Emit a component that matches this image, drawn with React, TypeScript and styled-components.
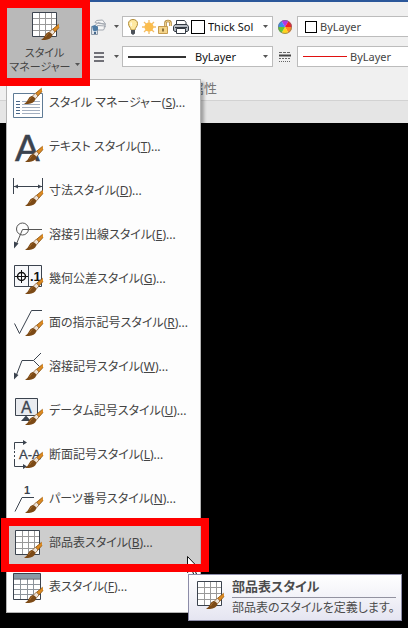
import React from "react";
import styled, { createGlobalStyle, css } from "styled-components";

const GlobalStyle = createGlobalStyle`
  * { box-sizing: border-box; }
  body {
    margin: 0;
    background: #000;
    color: #444;
    font: 12px/16px "Noto Sans", "Noto Sans CJK JP", sans-serif;
    font-feature-settings: "palt";
  }
  button, select { font: inherit; color: inherit; font-feature-settings: inherit; }
  svg { flex: none; }
`;

const Page = styled.main`
  min-height: 100vh;
  background: #000;
`;

const Ribbon = styled.header`
  border-top: 2px solid #2b579a;
  background: #f0f0f0;
`;

const Panel = styled.div`
  display: flex;
  height: 76px;
`;

const ManagerSlot = styled.div`
  position: relative;
  flex: 0 0 75px;
  height: 70px;
  margin: 6px 9px 0 7px;
`;

const ManagerButton = styled.button`
  position: relative;
  z-index: 3;
  display: flex;
  flex-direction: column;
  align-items: center;
  justify-content: flex-start;
  width: 100%;
  height: 100%;
  padding: 1px 0 0;
  border: 0;
  background: #b9b9b9;
  outline: 8px solid #f00;
  font-size: 11px;
  line-height: 14px;
  white-space: nowrap;

  svg:first-child { margin-bottom: 5px; }
`;

const ButtonLine = styled.span`
  display: flex;
  align-items: center;
  gap: 4px;
`;

const Tools = styled.div`
  flex: 1;
  min-width: 0;
  overflow: hidden;
  display: grid;
  grid-template-columns: 31px 151px 24px minmax(140px, 1fr);
  grid-auto-rows: 21px;
  row-gap: 9px;
  padding-top: 14px;
`;

const ToolButton = styled.button`
  display: flex;
  align-items: center;
  justify-content: space-between;
  padding: 0 3px 0 0;
  border: 0;
  background: none;
`;

const PlainTool = styled.span`
  display: flex;
  align-items: center;
  justify-content: center;
`;

const Field = styled.label`
  display: flex;
  align-items: center;
  padding: 0 4px 0 2px;
  border: 1px solid #bcbcbc;
  background: #fff;
`;

const Select = styled.select<{ $dark?: boolean }>`
  flex: 1;
  min-width: 0;
  width: 0;
  height: 19px;
  padding: 0;
  border: 0;
  appearance: none;
  background: none;
  font-size: 11px;
  color: ${(p) => (p.$dark ? "#111" : "#444")};
`;

const Swatch = styled.span<{ $size: number; $before: number }>`
  flex: none;
  width: ${(p) => p.$size}px;
  height: ${(p) => p.$size}px;
  margin: 0 3px 0 ${(p) => p.$before}px;
  border: 1px solid #000;
  background: #fff;
`;

const LineSample = styled.span<{ $width: number; $weight: number; $color: string; $after: number }>`
  flex: none;
  width: ${(p) => p.$width}px;
  height: ${(p) => p.$weight}px;
  margin: 0 ${(p) => p.$after}px 0 3px;
  background: ${(p) => p.$color};
`;

const PanelTitle = styled.div`
  height: 23px;
  border-bottom: 1px solid #d2d2d2;
  color: #777;
  font-size: 13px;
  line-height: 20px;
  text-align: center;
`;

const TabStrip = styled.div`
  height: 22px;
  background: #e5e5e5;
`;

const Menu = styled.ul`
  position: absolute;
  z-index: 1;
  top: 71px;
  left: -1px;
  width: 195px;
  margin: 0;
  padding: 1px 0 3px;
  border: 1px solid #b4b4b4;
  background: #fdfdfd;
  box-shadow: 3px 3px 3px rgba(0, 0, 0, 0.3);
  list-style: none;
`;

const MenuRow = styled.li`
  position: relative;
`;

const MenuItem = styled.button<{ $active?: boolean }>`
  display: flex;
  align-items: center;
  gap: 5px;
  width: 100%;
  height: 44px;
  padding: 0 0 0 5px;
  border: 0;
  background: none;
  text-align: left;
  white-space: nowrap;
  ${(p) => p.$active && css`background: #cdcdcd;`}
`;

const Marker = styled.span`
  position: absolute;
  z-index: 4;
  inset: -3px -9px -7px -6px;
  border: 8px solid #f00;
  pointer-events: none;
`;

const Pointer = styled.svg`
  position: absolute;
  z-index: 2;
  top: 35px;
  right: 0;
`;

const Tooltip = styled.div`
  position: absolute;
  z-index: 3;
  top: 53px;
  left: 181px;
  display: flex;
  gap: 6px;
  width: 214px;
  padding: 3px 5px 2px 5px;
  border: 1px solid #8c8ca8;
  background: linear-gradient(#fff, #e5e5f1);
  color: #4c4c4c;
  white-space: nowrap;
`;

const TooltipText = styled.div`
  flex: 1;
`;

const TooltipTitle = styled.strong`
  display: block;
  padding-bottom: 3px;
  border-bottom: 1px solid #9292a0;
  font-size: 13px;
  line-height: 16px;
`;

const TooltipBody = styled.span`
  display: block;
  line-height: 20px;
`;

const IconBox = styled.svg`
  overflow: visible;
`;

const INK = "#3b434e";

const Arrow = () => (
  <svg width="5" height="3" viewBox="0 0 5 3" aria-hidden="true">
    <path d="M0 0h5L2.500 3z" fill="#555" />
  </svg>
);

const Brush = ({ x = 13, y = 15 }: { x?: number; y?: number }) => (
  <g transform={`translate(${x} ${y})`}>
    <path d="M18 0 11 5.500 13.500 8.500 18 3.500z" fill="#dc8a22" />
    <path d="M17.500 .3 11 5.800M18 3.500l-4 4.500" stroke="#8a5312" strokeWidth=".8" />
    <path d="M11.500 5 8 8.500 10.800 11.500 14 8z" fill="#efe4d8" stroke="#8b5b28" strokeWidth=".8" />
    <path d="M7.500 8Q11 8.500 11.300 11.500 9.500 15.900 4 15.900H0Q3 14 4 11.500 5 8.500 7.500 8z" fill="#7c4a16" />
    <path d="M7.500 9.500Q6 10 4.500 13" stroke="#a86c2c" fill="none" />
  </g>
);

const Icon = ({ children }: { children: React.ReactNode }) => (
  <IconBox width="32" height="32" viewBox="0 0 32 32" fill="none" aria-hidden="true">
    {children}
  </IconBox>
);

const GridIcon = () => (
  <Icon>
    <path d="M3.500 3.500h24v24h-24z" fill="#fff" />
    <path d="M10.500 4v23M16.500 4v23M22.500 4v23M4 9.500h23M4 15.500h23M4 21.500h23" stroke="#999" />
    <path d="M3.500 3.500h24v24h-24z" stroke={INK} />
    <Brush x={12} y={15} />
  </Icon>
);

const icons: Record<string, React.ReactNode> = {
  S: (
    <Icon>
      <path d="M1.500 6.500h29v24h-29z" fill="#fff" stroke="#5f7b95" />
      <path d="M4 14.500h4M4 17.500h4M4 20.500h4M4 23.500h4M4 26.500h4" stroke="#4a6788" />
      <path d="M10 14.500h18M10 17.500h18M10 20.500h18M10 23.500h18M10 26.500h18" stroke="#a3afc0" />
      <Brush x={12} y={1} />
    </Icon>
  ),
  T: (
    <Icon>
      <text x="3" y="30" fontFamily="Liberation Sans" fontSize="37" fill={INK} stroke={INK} strokeWidth=".5">A</text>
      <Brush />
    </Icon>
  ),
  D: (
    <Icon>
      <path d="M1.500 3v16M30.500 3v16M2 11.500h28" stroke={INK} />
      <path d="M2 11.500l4-2v4zM30 11.500l-4-2v4z" fill={INK} />
      <Brush />
    </Icon>
  ),
  E: (
    <Icon>
      <circle cx="10.500" cy="10" r="6" stroke="#555" />
      <path d="M30 10.500H10.500L4 26" stroke="#555" />
      <path d="M2 29.500V22.500l4.500 2z" fill={INK} />
      <Brush />
    </Icon>
  ),
  G: (
    <Icon>
      <path d="M2.500 2.500h27v21h-27zM16.500 2.500v21" fill="#f7f8fa" stroke={INK} />
      <circle cx="9.500" cy="13.500" r="4" stroke="#111" strokeWidth="1.500" />
      <path d="M3 13.500h13M9.500 7v13" stroke="#111" />
      <text x="18" y="18" fontFamily="Liberation Sans" fontWeight="700" fontSize="13" fill="#111">.1</text>
      <Brush />
    </Icon>
  ),
  R: (
    <Icon>
      <path d="M2.500 16.500l5 10L19.500 3.500H30" stroke={INK} />
      <Brush y={13} />
    </Icon>
  ),
  W: (
    <Icon>
      <path d="M4 25l6-15.500h11.500L29 2M21.500 9.500l6 6" stroke={INK} />
      <path d="M2 28.500V21.500l4.500 2.500z" fill={INK} />
      <Brush y={13} />
    </Icon>
  ),
  U: (
    <Icon>
      <path d="M3.500 3.500h22v17h-22z" fill="#e9ebef" stroke={INK} />
      <text x="9" y="18" fontFamily="Liberation Sans" fontSize="16" fill={INK} stroke={INK} strokeWidth=".3">A</text>
      <path d="M14 20.500l5 5.500H9z" fill={INK} />
      <Brush y={14} />
    </Icon>
  ),
  L: (
    <Icon>
      <path d="M12 3.500H2.500v7M2.500 12v2M2.500 16v2M2.500 20v7.500H12" stroke={INK} />
      <path d="M11 1l4 2.500-4 2.500zM11 25l4 2.500-4 2.500z" fill={INK} />
      <text x="7" y="20" fontFamily="Liberation Sans" fontSize="13" fill={INK} stroke={INK} strokeWidth=".3">A-A</text>
      <Brush y={13} />
    </Icon>
  ),
  N: (
    <Icon>
      <path d="M3 28.500L10 14.500h12" stroke={INK} />
      <text x="12" y="11" fontFamily="Liberation Sans" fontWeight="700" fontSize="11" fill={INK}>1</text>
      <Brush y={14} />
    </Icon>
  ),
  B: <GridIcon />,
  F: (
    <Icon>
      <path d="M1.500 2.500h27v26h-27z" fill="#fff" />
      <path d="M1.500 2.500h27v5h-27z" fill="#899aa5" />
      <path d="M8.500 8v20M15.500 8v20M21.500 8v20M2 13.500h26M2 18.500h26M2 23.500h26" stroke="#8d949b" />
      <path d="M1.500 2.500h27v26h-27zM2 8h27" stroke={INK} />
      <Brush y={16} />
    </Icon>
  ),
};

const items = [
  ["スタイル マネージャー", "S"],
  ["テキスト スタイル", "T"],
  ["寸法スタイル", "D"],
  ["溶接引出線スタイル", "E"],
  ["幾何公差スタイル", "G"],
  ["面の指示記号スタイル", "R"],
  ["溶接記号スタイル", "W"],
  ["データム記号スタイル", "U"],
  ["断面記号スタイル", "L"],
  ["パーツ番号スタイル", "N"],
  ["部品表スタイル", "B"],
  ["表スタイル", "F"],
];

const LayersIcon = () => (
  <svg width="16" height="16" viewBox="0 0 16 16" fill="none" aria-hidden="true">
    <path d="M3.500 9.500l3-3 8 .5-2 4H7M4 6.500l3-3 7.500 2-1.500 3M4 3.500l1.500-2 6-.5 3 4-7-.5z" fill="#f6f6f6" stroke="#a2a8b0" />
    <path d="M.5 7.500h6v8h-6z" fill="#dfe5ec" stroke="#8e9aa8" />
    <path d="M1 7l3-1 3 2v3l-3 1.500-2-1z" fill="#4e7ca5" />
    <path d="M3 13h2v2H3z" fill="#47698b" />
  </svg>
);

const LineweightIcon = () => (
  <svg width="16" height="10" viewBox="0 0 16 10" aria-hidden="true">
    <path d="M3 1h10M3 5h10M3 9h10" stroke="#45454f" strokeWidth="1.500" />
  </svg>
);

const BulbIcon = () => (
  <svg width="16" height="18" viewBox="0 0 16 18" fill="none" aria-hidden="true">
    <path d="M6 12C6 9.500 3.500 9 3.500 5.500 3.500 3 5.500 1.500 8 1.500s4.500 1.500 4.500 4C12.500 9 10 9.500 10 12z" fill="#ffe9a0" stroke="#b08a35" />
    <path d="M6.500 4.500Q5.500 6 6.500 8" stroke="#fffbe8" strokeWidth="1.500" />
    <path d="M6 12h4v3.500L8 17l-2-1.500z" fill="#4c5158" />
  </svg>
);

const SunIcon = () => (
  <svg width="16" height="16" viewBox="0 0 16 16" aria-hidden="true">
    <path d="M8 1v14M1 8h14M3 3l10 10M13 3L3 13" stroke="#f2bd68" strokeWidth="1.300" />
    <circle cx="8" cy="8" r="4.500" fill="#fbbd4d" />
  </svg>
);

const LockIcon = () => (
  <svg width="16" height="16" viewBox="0 0 16 16" fill="none" aria-hidden="true">
    <path d="M8.500 7V4Q8.500 2 11 2t2.500 2v3" stroke="#b28a43" strokeWidth="2.600" />
    <path d="M8.500 7V4Q8.500 2 11 2t2.500 2v3" stroke="#f3d58d" />
    <path d="M1.500 7.500h9v7h-9z" fill="#f4d48a" stroke="#c69c4f" />
    <path d="M6 9.500v3" stroke="#6b5222" strokeWidth="1.500" />
  </svg>
);

const PrinterIcon = () => (
  <svg width="16" height="16" viewBox="0 0 16 16" fill="none" aria-hidden="true">
    <path d="M3.500 6V1.500h8l1.500 2V6" fill="#fff" stroke="#333a43" />
    <path d="M2 5.500h12l1.500 2v4L14 12.500H2L.5 11.500v-4z" fill="#b4bac2" stroke="#333a43" />
    <path d="M2 8.500h12" stroke="#333a43" />
    <path d="M3.500 9.500h9v5h-9z" fill="#fff" stroke="#333a43" />
  </svg>
);

const wheel = ["#b037e6", "#f21e2b", "#ff8a1c", "#ffd21a", "#63c832", "#3a8df0"];

const ColorWheel = () => (
  <svg width="14" height="14" viewBox="-7 -7 14 14" aria-hidden="true">
    {wheel.map((color, i) => (
      <path key={color} d="M0 0L-3.500 -6.060A7 7 0 0 1 3.500 -6.060Z" fill={color} transform={`rotate(${i * 60})`} />
    ))}
    <circle r="6.500" fill="none" stroke="#777" strokeWidth=".7" />
  </svg>
);

const LinetypeIcon = () => (
  <svg width="12" height="12" viewBox="0 0 12 12" aria-hidden="true">
    <path d="M0 4.500h12" stroke="#444" strokeWidth="2" />
    <path d="M0 1.500h12" stroke="#666" strokeDasharray="3 1" />
    <path d="M0 7.500h12" stroke="#666" strokeDasharray="2 1" />
    <path d="M0 10.500h12" stroke="#666" strokeDasharray="1 1" />
  </svg>
);

export default function App() {
  return (
    <Page>
      <GlobalStyle />
      <Ribbon>
        <Panel>
          <ManagerSlot>
            <ManagerButton aria-haspopup="menu" aria-expanded="true">
              <GridIcon />
              <ButtonLine>スタイル</ButtonLine>
              <ButtonLine>
                マネージャー
                <Arrow />
              </ButtonLine>
            </ManagerButton>
            <Menu role="menu">
              {items.map(([label, key]) => (
                <MenuRow key={key} role="none">
                  <MenuItem role="menuitem" $active={key === "B"}>
                    {icons[key]}
                    <span>
                      {label}(<u>{key}</u>)...
                    </span>
                  </MenuItem>
                  {key === "B" && (
                    <>
                      <Marker />
                      <Pointer width="13" height="20" viewBox="0 0 13 20" aria-hidden="true">
                        <path d="M.5.5v16l4-3.500 2.500 6 2.500-1-2.500-5.500h5z" fill="#fff" stroke="#111" />
                      </Pointer>
                      <Tooltip role="tooltip">
                        <GridIcon />
                        <TooltipText>
                          <TooltipTitle>部品表スタイル</TooltipTitle>
                          <TooltipBody>部品表のスタイルを定義します。</TooltipBody>
                        </TooltipText>
                      </Tooltip>
                    </>
                  )}
                </MenuRow>
              ))}
            </Menu>
          </ManagerSlot>
          <Tools>
            <ToolButton aria-label="画層">
              <LayersIcon />
              <Arrow />
            </ToolButton>
            <Field>
              <BulbIcon />
              <SunIcon />
              <LockIcon />
              <PrinterIcon />
              <Swatch $size={14} $before={2} />
              <Select $dark aria-label="画層名">
                <option>Thick Sol</option>
              </Select>
              <Arrow />
            </Field>
            <PlainTool>
              <ColorWheel />
            </PlainTool>
            <Field>
              <Swatch $size={12} $before={5} />
              <Select aria-label="色">
                <option>ByLayer</option>
              </Select>
            </Field>
            <ToolButton aria-label="線の太さ">
              <LineweightIcon />
              <Arrow />
            </ToolButton>
            <Field>
              <LineSample $width={58} $weight={2} $color="#333" $after={9} />
              <Select $dark aria-label="線の太さの値">
                <option>ByLayer</option>
              </Select>
              <Arrow />
            </Field>
            <PlainTool>
              <LinetypeIcon />
            </PlainTool>
            <Field>
              <LineSample $width={44} $weight={1} $color="#e01010" $after={3} />
              <Select aria-label="線種">
                <option>ByLayer</option>
              </Select>
            </Field>
          </Tools>
        </Panel>
        <PanelTitle>属性</PanelTitle>
        <TabStrip />
      </Ribbon>
    </Page>
  );
}
